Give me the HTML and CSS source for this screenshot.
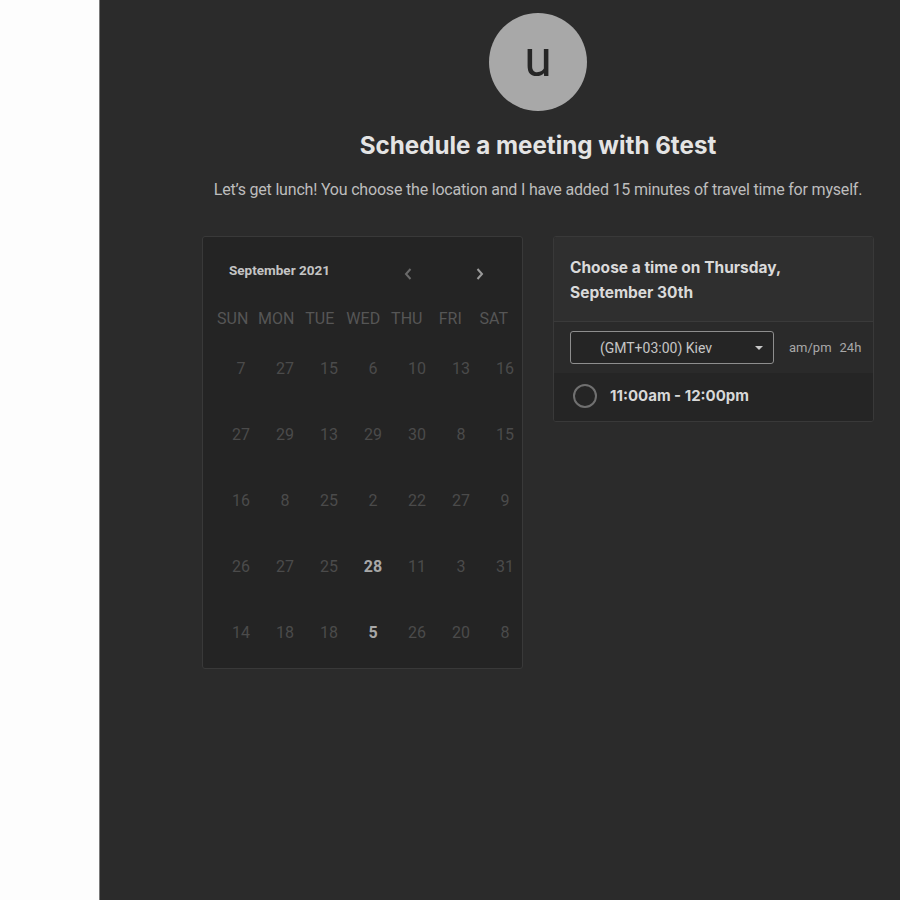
FILE: index.html
```html
<!DOCTYPE html>
<html>
<head>
<meta charset="utf-8">
<link rel="stylesheet" href="styles.css">
</head>
<body>
<div class="sidebar"></div>
<div class="main">
  <div class="avatar">u</div>
  <h1 class="title">Schedule a meeting with 6test</h1>
  <p class="subtitle">Let’s get lunch! You choose the location and I have added 15 minutes of travel time for myself.</p>
  <div class="cards">
    <div class="calendar">
      <div class="cal-head">
        <span class="month">September 2021</span>
        <span class="nav prev"><svg width="10" height="14" viewBox="0 0 10 14"><path d="M7.5 2 L3 7 L7.5 12" fill="none" stroke="currentColor" stroke-width="2"/></svg></span>
        <span class="nav next"><svg width="10" height="14" viewBox="0 0 10 14"><path d="M2.5 2 L7 7 L2.5 12" fill="none" stroke="currentColor" stroke-width="2"/></svg></span>
      </div>
      <div class="weekdays">
        <span>SUN</span><span>MON</span><span>TUE</span><span>WED</span><span>THU</span><span>FRI</span><span>SAT</span>
      </div>
      <div class="days">
        <span>7</span><span>27</span><span>15</span><span>6</span><span>10</span><span>13</span><span>16</span>
        <span>27</span><span>29</span><span>13</span><span>29</span><span>30</span><span>8</span><span>15</span>
        <span>16</span><span>8</span><span>25</span><span>2</span><span>22</span><span>27</span><span>9</span>
        <span>26</span><span>27</span><span>25</span><span class="avail">28</span><span>11</span><span>3</span><span>31</span>
        <span>14</span><span>18</span><span>18</span><span class="avail">5</span><span>26</span><span>20</span><span>8</span>
      </div>
    </div>
    <div class="times">
      <div class="times-head">Choose a time on Thursday,<br>September 30th</div>
      <div class="tz-row">
        <div class="tz-select"><span class="tz-text">(GMT+03:00) Kiev</span><span class="caret"></span></div>
        <div class="fmt"><span>am/pm</span><span>24h</span></div>
      </div>
      <div class="slot">
        <span class="radio"></span>
        <span class="slot-text">11:00am - 12:00pm</span>
      </div>
    </div>
  </div>
</div>
</body>
</html>
```
FILE: styles.css
```css
html, body {
  margin: 0;
  padding: 0;
  height: 100%;
}
body {
  display: flex;
  overflow: hidden;
  background: #2b2b2b;
  font-family: Roboto, "Liberation Sans", sans-serif;
}
.sidebar {
  flex: 0 0 100px;
  background: #fdfdfd;
  border-right: 1px solid #7a7a7a;
  box-sizing: border-box;
}
.main {
  flex: 0 0 876px;
  height: 900px;
  background: #2b2b2b;
  display: flex;
  flex-direction: column;
  align-items: center;
}
.avatar {
  margin-top: 13px;
  width: 98px;
  height: 98px;
  border-radius: 50%;
  background: #a8a8a8;
  color: #262626;
  font-family: Roboto, sans-serif;
  font-size: 50px;
  line-height: 92px;
  text-align: center;
}
.title {
  margin: 20px 0 0;
  font-family: Inter, "Noto Sans", sans-serif;
  font-weight: 700;
  font-size: 24.2px;
  line-height: 30px;
  color: #e4e4e4;
}
.subtitle {
  margin: 19px 0 0;
  font-size: 16px;
  line-height: 20px;
  color: #bdbdbd;
  letter-spacing: -0.19px;
}
.cards {
  margin-top: 36px;
  display: flex;
  gap: 30px;
  align-items: flex-start;
}
.calendar {
  width: 321px;
  height: 433px;
  box-sizing: border-box;
  background: #242424;
  border: 1px solid #393939;
  border-radius: 3px;
}
.cal-head {
  display: flex;
  align-items: center;
  height: 24px;
  margin-top: 21px;
  padding-left: 26px;
}
.month {
  font-size: 13.5px;
  font-weight: 700;
  color: #c4c4c4;
  width: 174px;
}
.nav {
  display: flex;
  align-items: center;
  margin-top: 8px;
}
.prev { color: #6a6a6a; width: 72px; }
.next { color: #9a9a9a; }
.weekdays {
  display: grid;
  grid-template-columns: repeat(7, 43.5px);
  margin: 27px 0 0 8px;
  font-size: 16px;
  line-height: 20px;
  color: #565656;
  text-align: center;
}
.days {
  display: grid;
  grid-template-columns: repeat(7, 44px);
  grid-auto-rows: 66px;
  margin: 25px 0 0 16px;
  font-size: 16px;
  line-height: 30px;
  color: #4b4b4b;
  text-align: center;
}
.days .avail {
  color: #a8a8a8;
  font-weight: 700;
}
.times {
  width: 321px;
  box-sizing: border-box;
  background: #2a2a2a;
  border: 1px solid #393939;
  border-radius: 3px;
  overflow: hidden;
}
.times-head {
  background: #2f2f2f;
  border-bottom: 1px solid #3a3a3a;
  padding: 18px 16px 16px;
  font-family: Inter, Roboto, sans-serif;
  font-weight: 700;
  font-size: 15.5px;
  line-height: 25px;
  color: #dadada;
}
.tz-row {
  display: flex;
  align-items: center;
  padding: 9px 16px 9px 16px;
}
.tz-select {
  flex: 0 0 204px;
  height: 33px;
  box-sizing: border-box;
  border: 1px solid #8e8e8e;
  border-radius: 3px;
  background: #252525;
  display: flex;
  align-items: center;
}
.tz-text {
  flex: 1;
  text-align: center;
  font-size: 14px;
  color: #c6c6c6;
  padding-right: 14px;
}
.caret {
  width: 0;
  height: 0;
  border-left: 4px solid transparent;
  border-right: 4px solid transparent;
  border-top: 4px solid #c8c8c8;
  margin-right: 10px;
}
.fmt {
  margin-left: 15px;
  display: flex;
  gap: 8px;
  font-size: 13px;
  color: #a8a8a8;
  white-space: nowrap;
}
.slot {
  background: #252525;
  display: flex;
  align-items: center;
  height: 48px;
  padding-left: 19px;
  padding-bottom: 3px;
  box-sizing: border-box;
}
.radio {
  width: 24px;
  height: 24px;
  border: 2px solid #707070;
  border-radius: 50%;
  box-sizing: border-box;
}
.slot-text {
  margin-left: 13px;
  font-family: Inter, Roboto, sans-serif;
  font-weight: 700;
  font-size: 15px;
  color: #d8d8d8;
}
```
